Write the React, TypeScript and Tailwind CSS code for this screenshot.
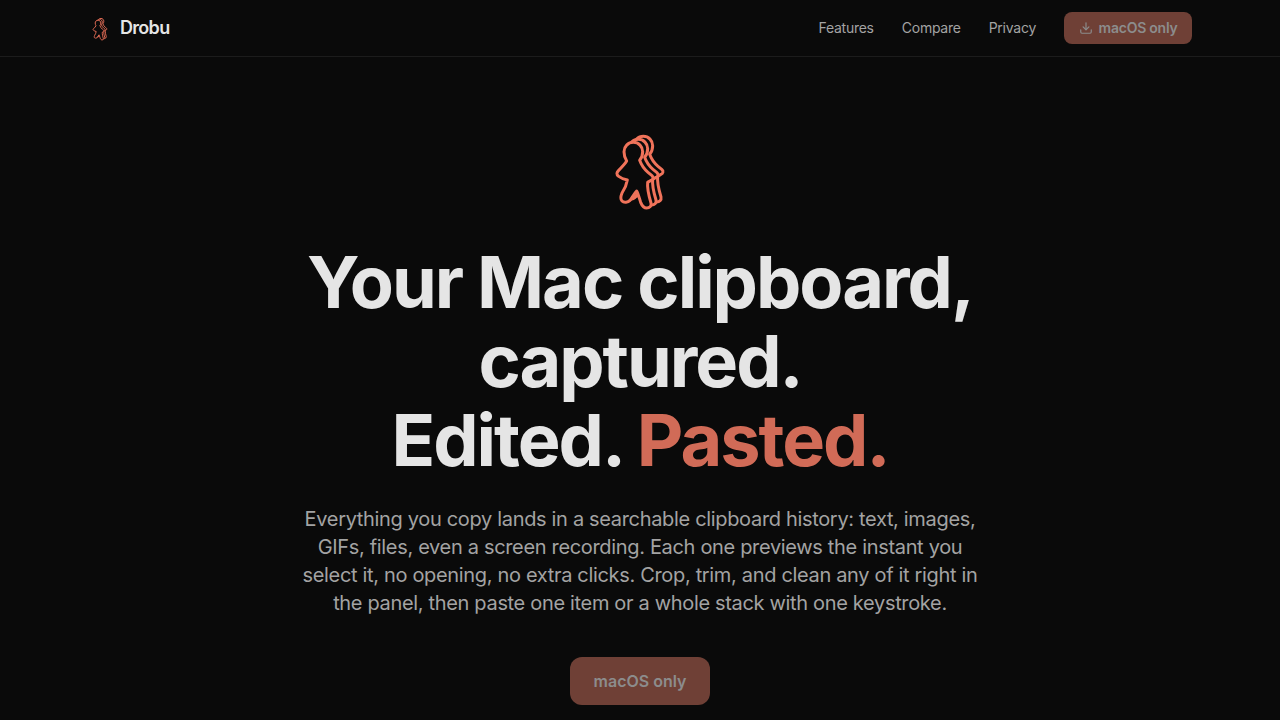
import React from "react";

const BODY =
  "M100 52 C116 52 128 65 128 80 C128 92 124 100 119 106 C124 120 132 132 144 142 L156 152 C161 156 159 164 153 166 C150 168 146 170 143 172 C141 190 147 214 153 234 C155 244 148 249 140 249 C132 249 126 242 122 232 C118 220 114 204 110 198 C104 204 98 216 90 226 C84 232 72 234 66 228 C60 222 62 214 66 204 C74 192 80 178 82 165 C74 163 64 160 56 154 C48 148 50 142 56 136 C64 128 74 118 80 108 C75 100 72 90 72 80 C72 65 84 52 100 52 Z";

function Logo({ className }: { className: string }) {
  return (
    <svg viewBox="0 0 240 270" className={className} fill="none" stroke="#f0735a" strokeWidth="9" strokeLinejoin="round">
      <path d={BODY} transform="translate(30 -18)" fill="#0a0a0a" />
      <path d={BODY} transform="translate(15 -9)" fill="#0a0a0a" />
      <path d={BODY} fill="#0a0a0a" />
    </svg>
  );
}

function DownloadIcon() {
  return (
    <svg viewBox="0 0 24 24" className="h-[14px] w-[14px]" fill="none" stroke="currentColor" strokeWidth="2" strokeLinecap="round" strokeLinejoin="round">
      <path d="M12 15V3" />
      <path d="M21 15v4a2 2 0 0 1-2 2H5a2 2 0 0 1-2-2v-4" />
      <path d="m7 10 5 5 5-5" />
    </svg>
  );
}

export default function App() {
  return (
    <div className="h-screen overflow-hidden bg-[#0a0a0a] font-['Inter','Liberation_Sans',sans-serif] text-[#e5e5e5]">
      <header className="border-b border-[#1c1c1c]">
        <div className="mx-auto flex h-14 max-w-[1152px] items-center justify-between px-6">
          <div className="flex items-center gap-2">
            <Logo className="h-[27px] w-6" />
            <span className="text-lg font-semibold tracking-[-0.7px]">Drobu</span>
          </div>
          <nav className="flex items-center gap-7 text-sm tracking-[-0.25px] text-[#a3a3a3]">
            <a>Features</a>
            <a>Compare</a>
            <a>Privacy</a>
            <button className="flex h-8 w-32 items-center justify-center gap-1.5 rounded-lg bg-[#6f4036] text-sm font-semibold text-[#8c8c8c]">
              <DownloadIcon />
              macOS only
            </button>
          </nav>
        </div>
      </header>
      <main className="flex flex-col items-center pt-[68px] text-center">
        <Logo className="h-[90px] w-20" />
        <h1 className="mt-[27px] text-[72px] leading-[79px] font-bold tracking-[-0.028em]">
          Your Mac clipboard,
          <br />
          captured.
          <br />
          Edited. <span className="text-[#d16b57]">Pasted.</span>
        </h1>
        <p className="mt-[26px] w-[690px] text-xl leading-7 tracking-[-0.33px] text-[#a3a3a3]">
          Everything you copy lands in a searchable clipboard history: text, images, GIFs, files, even a screen recording. Each one previews the instant you select it, no opening, no extra clicks. Crop, trim, and clean any of it right in the panel, then paste one item or a whole stack with one keystroke.
        </p>
        <button className="mt-10 h-12 w-[140px] rounded-xl bg-[#6f4036] text-base font-semibold text-[#8c8c8c]">
          macOS only
        </button>
      </main>
    </div>
  );
}
